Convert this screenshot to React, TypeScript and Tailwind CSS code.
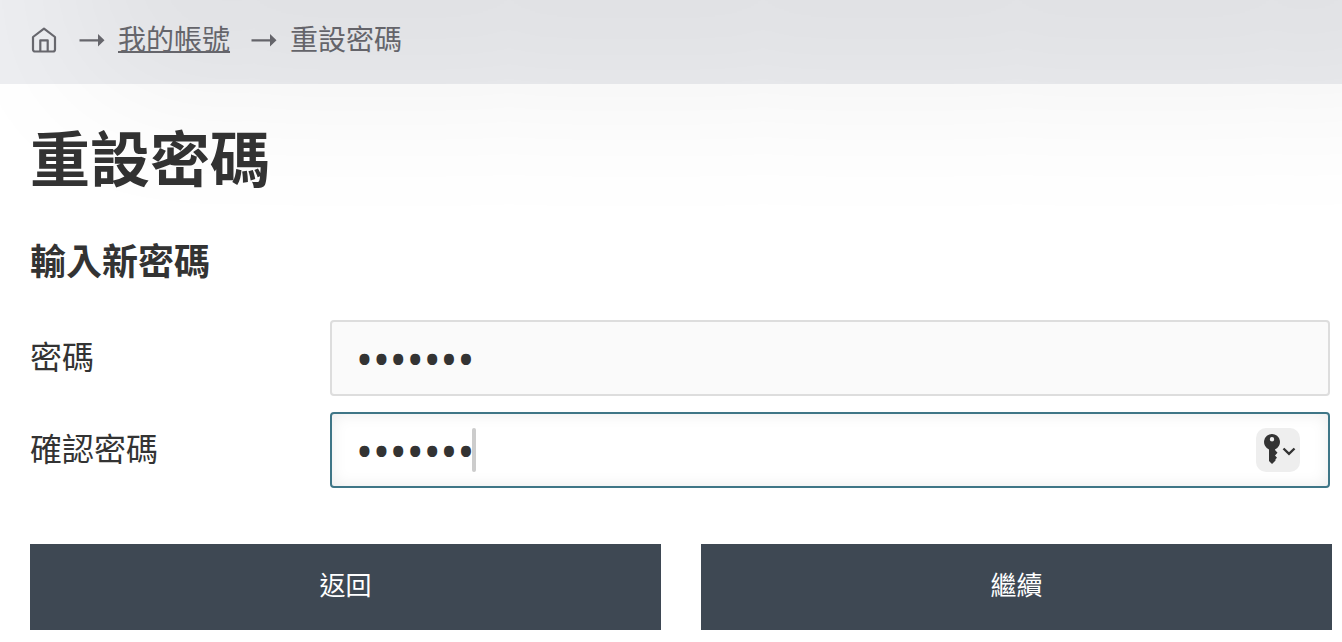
function ArrowIcon() {
  return (
    <svg className="h-4 w-[26px]" viewBox="0 0 26 16" fill="currentColor" aria-hidden="true">
      <path d="M.5 7.200H19V2l6.500 6.200-6.500 6.200V9.400H.5z" />
    </svg>
  );
}

function HomeIcon() {
  return (
    <svg
      className="size-[26px]"
      viewBox="0 0 26 26"
      fill="none"
      stroke="currentColor"
      strokeWidth="2.200"
      strokeLinejoin="round"
      aria-hidden="true"
    >
      <path d="M2 10 13 1.600 24 10v12.500a2 2 0 0 1-2 2H4a2 2 0 0 1-2-2z" />
      <path d="M9.300 24.500V13.300h7.400v11.200" />
    </svg>
  );
}

function KeyIcon() {
  return (
    <svg className="h-8 w-9" viewBox="0 0 36 32" aria-hidden="true">
      <path
        fill="#333333"
        fillRule="evenodd"
        d="M12 0a8 8 0 0 0-3 15.400V27l3 3 3.500-3.500v-1.200l1.500-1.600-2-2.200 2.500-2.700L15 16v-.6A8 8 0 0 0 12 0zm0 3a2.200 2.200 0 1 1 0 4.400A2.200 2.200 0 0 1 12 3z"
      />
      <path d="m23.500 14.500 5.500 5.300 5.500-5.300" fill="none" stroke="#333333" strokeWidth="2.400" />
    </svg>
  );
}

export default function App() {
  return (
    <div className="relative min-h-screen overflow-hidden bg-white font-['Noto_Sans_CJK_TC',sans-serif] text-[#333333]">
      {/* soft shadow cast by the menu above the page */}
      <div
        className="pointer-events-none absolute -top-80 -right-60 left-20 h-60 shadow-[0_170px_160px_rgba(0,0,0,0.06)]"
        aria-hidden="true"
      />

      <nav className="bg-[#edeef1] px-[30px] pt-[18px] pb-[22px] text-[28px] leading-[44px] text-[#69696f]" aria-label="breadcrumb">
        <ol className="flex h-11 items-center">
          <li className="flex items-center">
            <a href="#home" aria-label="首頁" className="ml-px">
              <HomeIcon />
            </a>
          </li>
          <li className="ml-[22px] flex items-center gap-[13px]">
            <ArrowIcon />
            <a href="#account" className="-mt-1 underline decoration-2 underline-offset-1">
              我的帳號
            </a>
          </li>
          <li className="ml-[21px] flex items-center gap-[13px]" aria-current="page">
            <ArrowIcon />
            <span className="-mt-1">重設密碼</span>
          </li>
        </ol>
      </nav>

      <main className="pr-[10px] pl-[30px]">
        <h1 className="pt-[34px] text-[60px] leading-[76px] font-bold">重設密碼</h1>

        <form>
          <h2 className="pt-10 text-[36px] leading-[50px] font-bold">輸入新密碼</h2>

          <div className="mt-9 flex flex-col gap-4 pr-0.5">
            <div className="flex items-center">
              <label htmlFor="password" className="w-[300px] shrink-0 pb-1.5 text-[32px] leading-[48px]">
                密碼
              </label>
              <input
                id="password"
                type="password"
                defaultValue="secret1"
                className="h-[76px] min-w-0 flex-1 rounded-[4px] border-2 border-[#dddddd] bg-[#fafafa] px-6 font-['Noto_Sans',sans-serif] text-[45px] outline-none"
              />
            </div>

            <div className="flex items-center">
              <label htmlFor="confirm" className="w-[300px] shrink-0 pb-1.5 text-[32px] leading-[48px]">
                確認密碼
              </label>
              <div className="relative flex min-w-0 flex-1">
                <input
                  id="confirm"
                  type="password"
                  defaultValue="secret1"
                  className="h-[76px] w-full rounded-[4px] border-2 border-[#3f7687] bg-white px-6 font-['Noto_Sans',sans-serif] text-[45px] shadow-[inset_0_0_16px_rgba(0,0,0,0.08)] outline-none"
                />
                <span className="absolute top-4 left-[142px] h-11 w-1 rounded-sm bg-[#cccccc]" aria-hidden="true" />
                <button
                  type="button"
                  aria-label="密碼管理"
                  className="absolute top-4 right-[30px] flex size-11 items-center justify-center rounded-[10px] bg-[#eeeeee]"
                >
                  <KeyIcon />
                </button>
              </div>
            </div>
          </div>

          <div className="mt-14 flex gap-10">
            <button type="button" className="h-[86px] flex-1 bg-[#3e4853] pb-1.5 text-[26px] leading-10 text-white">
              返回
            </button>
            <button type="submit" className="h-[86px] flex-1 bg-[#3e4853] pb-1.5 text-[26px] leading-10 text-white">
              繼續
            </button>
          </div>
        </form>
      </main>
    </div>
  );
}
